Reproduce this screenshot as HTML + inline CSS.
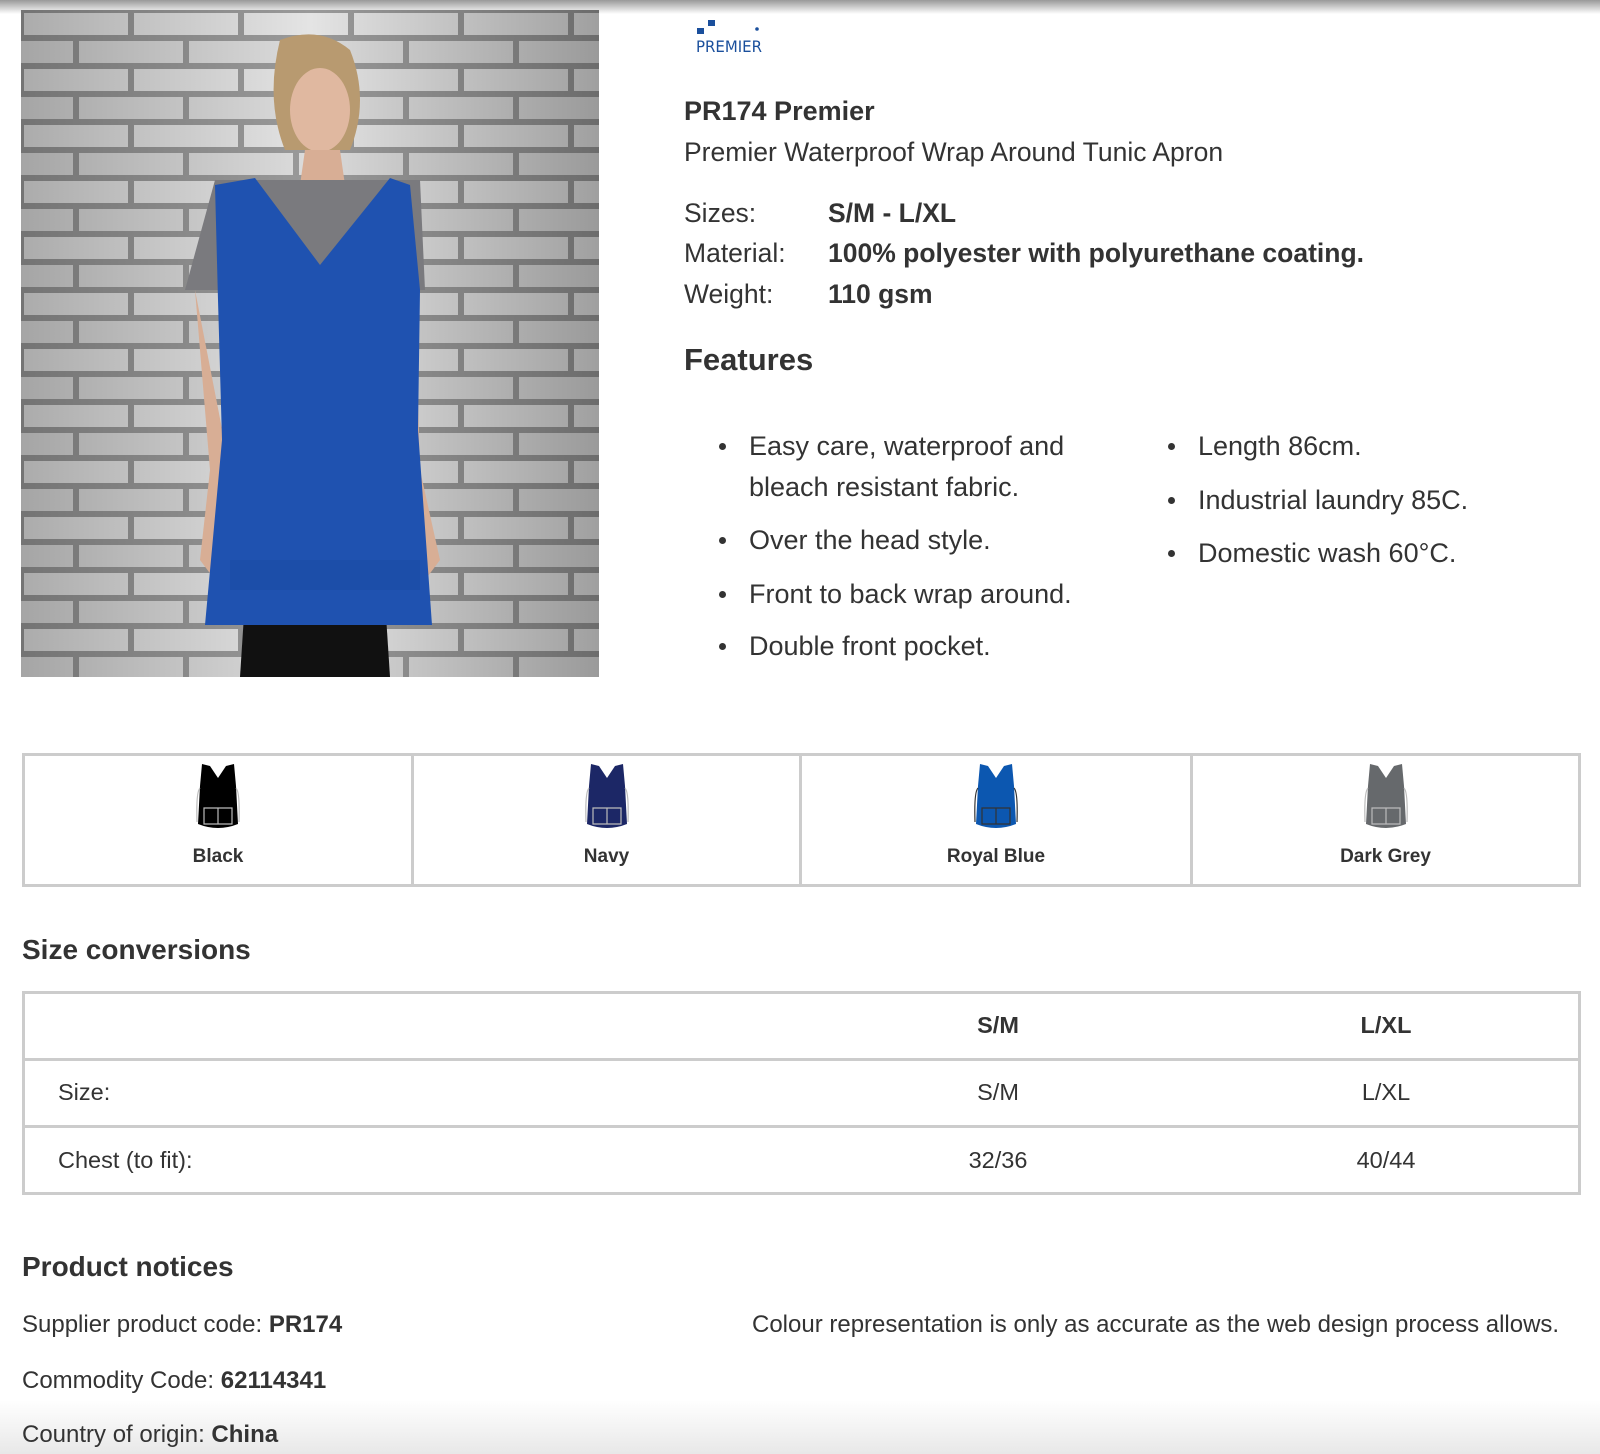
<!DOCTYPE html>
<html><head><meta charset="utf-8">
<style>
*{margin:0;padding:0;box-sizing:border-box}
body{width:1600px;height:1454px;position:relative;background:#fff;font-family:"Liberation Sans",Arial,sans-serif;color:#333;overflow:hidden}
.a{position:absolute;white-space:nowrap}
.t{font-size:26.5px;line-height:30px}
.f{font-size:27px;line-height:30px}
b{font-weight:bold}
.sw{position:absolute;top:753px;height:134px;border:3px solid #ccc;border-right:none}
.sw span{position:absolute;left:0;right:0;top:90px;text-align:center;font-weight:bold;font-size:19px;color:#333}
.sw svg{position:absolute;left:50%;top:8px;margin-left:-22px}
.dot{position:absolute;width:7px;height:7px;border-radius:50%;background:#333}
.c{font-size:23.5px}
</style></head><body>
<div class="a" style="left:0;top:0;width:1600px;height:14px;background:linear-gradient(#999,#fff)"></div>
<div class="a" style="left:0;top:1400px;width:1600px;height:54px;background:linear-gradient(rgba(255,255,255,0),#e8e8e8)"></div>

<svg class="a" style="left:21px;top:10px" width="578" height="667" viewBox="21 10 578 667">
<defs><pattern id="br" x="21" y="10" width="110" height="56" patternUnits="userSpaceOnUse">
<rect width="110" height="56" fill="#9a9a9a"/>
<rect x="3" y="3" width="104" height="22" fill="#e4e4e4"/>
<rect x="-52" y="31" width="104" height="22" fill="#dcdcdc"/>
<rect x="58" y="31" width="104" height="22" fill="#dcdcdc"/>
</pattern>
<linearGradient id="sh" x1="0" x2="1"><stop offset="0" stop-color="#000" stop-opacity=".25"/><stop offset=".5" stop-color="#000" stop-opacity="0"/><stop offset="1" stop-color="#000" stop-opacity=".3"/></linearGradient></defs>
<rect x="21" y="10" width="578" height="667" fill="url(#br)"/>
<rect x="21" y="10" width="578" height="667" fill="url(#sh)"/>
<path d="M240 677 L245 600 L385 600 L390 677 Z" fill="#111"/>
<path d="M280 40 Q320 25 350 50 Q370 100 350 150 L285 150 Q265 100 280 40Z" fill="#b89a70"/>
<ellipse cx="320" cy="110" rx="30" ry="42" fill="#e0b8a0"/>
<path d="M305 150 L340 150 L345 185 L300 185Z" fill="#d8ae95"/>
<path d="M215 180 L420 180 L425 290 L185 290 Z" fill="#7a7a7e"/>
<path d="M195 290 L210 470 L200 560 L215 580 L230 470Z" fill="#d8ae95"/>
<path d="M415 290 L420 470 L440 560 L425 580 L405 470Z" fill="#d8ae95"/>
<path d="M215 185 L255 178 L320 265 L390 178 L410 185 L420 290 L418 430 L432 625 L205 625 L222 440 L218 300 Z" fill="#1f52b0"/>
<path d="M230 560 L420 560 L420 590 L230 590Z" fill="#1a4aa2" opacity=".5"/>
</svg>

<svg class="a" style="left:695px;top:18px" width="90" height="38" viewBox="0 0 90 38">
<rect x="2" y="10" width="7" height="6" fill="#1a4f9c"/><rect x="13" y="2" width="7" height="6" fill="#1a4f9c"/>
<circle cx="62" cy="11" r="1.8" fill="#1a4f9c"/>
<text x="1" y="34" font-family="DejaVu Sans,sans-serif" font-size="16" fill="#1a4f9c" textLength="66" lengthAdjust="spacingAndGlyphs">PREMIER</text>
</svg>

<div class="a" style="left:684px;top:96px;font-size:27px;font-weight:bold">PR174 Premier</div>
<div class="a t" style="left:684px;top:137px">Premier Waterproof Wrap Around Tunic Apron</div>
<div class="a t" style="left:684px;top:198px">Sizes:</div><div class="a t" style="left:828px;top:198px"><b>S/M - L/XL</b></div>
<div class="a t" style="left:684px;top:238px">Material:</div><div class="a t" style="left:828px;top:238px"><b>100% polyester with polyurethane coating.</b></div>
<div class="a t" style="left:684px;top:279px">Weight:</div><div class="a t" style="left:828px;top:279px"><b>110 gsm</b></div>
<div class="a" style="left:684px;top:342px;font-size:31px;font-weight:bold">Features</div>

<div class="dot" style="left:719px;top:443px"></div><div class="a f" style="left:749px;top:431px">Easy care, waterproof and</div>
<div class="a f" style="left:749px;top:472px">bleach resistant fabric.</div>
<div class="dot" style="left:719px;top:537px"></div><div class="a f" style="left:749px;top:525px">Over the head style.</div>
<div class="dot" style="left:719px;top:591px"></div><div class="a f" style="left:749px;top:579px">Front to back wrap around.</div>
<div class="dot" style="left:719px;top:643px"></div><div class="a f" style="left:749px;top:631px">Double front pocket.</div>
<div class="dot" style="left:1168px;top:443px"></div><div class="a f" style="left:1198px;top:431px">Length 86cm.</div>
<div class="dot" style="left:1168px;top:497px"></div><div class="a f" style="left:1198px;top:485px">Industrial laundry 85C.</div>
<div class="dot" style="left:1168px;top:550px"></div><div class="a f" style="left:1198px;top:538px">Domestic wash 60°C.</div>

<div class="sw" style="left:22px;width:389px"><svg width="44" height="66" viewBox="0 0 44 66"><path d="M6 0 L14 2 L22 14 L30 2 L38 0 L40 22 L42 60 Q22 68 2 60 L4 22Z" fill="#000"/><path d="M4 24 Q0 28 1 58 M40 24 Q44 28 43 58 M8 44 H36 V60 H8Z M22 44 V60" stroke="#bbb" stroke-width="1.2" fill="none"/></svg><span>Black</span></div>
<div class="sw" style="left:411px;width:388px"><svg width="44" height="66" viewBox="0 0 44 66"><path d="M6 0 L14 2 L22 14 L30 2 L38 0 L40 22 L42 60 Q22 68 2 60 L4 22Z" fill="#1c2766"/><path d="M4 24 Q0 28 1 58 M40 24 Q44 28 43 58 M8 44 H36 V60 H8Z M22 44 V60" stroke="#bbb" stroke-width="1.2" fill="none"/></svg><span>Navy</span></div>
<div class="sw" style="left:799px;width:391px"><svg width="44" height="66" viewBox="0 0 44 66"><path d="M6 0 L14 2 L22 14 L30 2 L38 0 L40 22 L42 60 Q22 68 2 60 L4 22Z" fill="#0c57b0"/><path d="M4 24 Q0 28 1 58 M40 24 Q44 28 43 58 M8 44 H36 V60 H8Z M22 44 V60" stroke="#333" stroke-width="1.2" fill="none"/></svg><span>Royal Blue</span></div>
<div class="sw" style="left:1190px;width:391px;border-right:3px solid #ccc"><svg width="44" height="66" viewBox="0 0 44 66"><path d="M6 0 L14 2 L22 14 L30 2 L38 0 L40 22 L42 60 Q22 68 2 60 L4 22Z" fill="#66696c"/><path d="M4 24 Q0 28 1 58 M40 24 Q44 28 43 58 M8 44 H36 V60 H8Z M22 44 V60" stroke="#bbb" stroke-width="1.2" fill="none"/></svg><span>Dark Grey</span></div>

<div class="a" style="left:22px;top:934px;font-size:28px;font-weight:bold">Size conversions</div>
<div class="a" style="left:22px;top:991px;width:1559px;height:204px;border:3px solid #ccc"></div>
<div class="a" style="left:22px;top:1058px;width:1559px;height:3px;background:#ccc"></div>
<div class="a" style="left:22px;top:1125px;width:1559px;height:3px;background:#ccc"></div>
<div class="a c" style="left:938px;top:1012px;width:120px;text-align:center;font-weight:bold">S/M</div>
<div class="a c" style="left:1326px;top:1012px;width:120px;text-align:center;font-weight:bold">L/XL</div>
<div class="a c" style="left:58px;top:1079px">Size:</div>
<div class="a c" style="left:938px;top:1079px;width:120px;text-align:center">S/M</div>
<div class="a c" style="left:1326px;top:1079px;width:120px;text-align:center">L/XL</div>
<div class="a c" style="left:58px;top:1147px">Chest (to fit):</div>
<div class="a c" style="left:938px;top:1147px;width:120px;text-align:center">32/36</div>
<div class="a c" style="left:1326px;top:1147px;width:120px;text-align:center">40/44</div>

<div class="a" style="left:22px;top:1251px;font-size:28px;font-weight:bold">Product notices</div>
<div class="a" style="left:22px;top:1311px;font-size:24px">Supplier product code: <b>PR174</b></div>
<div class="a" style="left:22px;top:1367px;font-size:24px">Commodity Code: <b>62114341</b></div>
<div class="a" style="left:22px;top:1421px;font-size:24px">Country of origin: <b>China</b></div>
<div class="a" style="left:752px;top:1311px;font-size:24px">Colour representation is only as accurate as the web design process allows.</div>
</body></html>
